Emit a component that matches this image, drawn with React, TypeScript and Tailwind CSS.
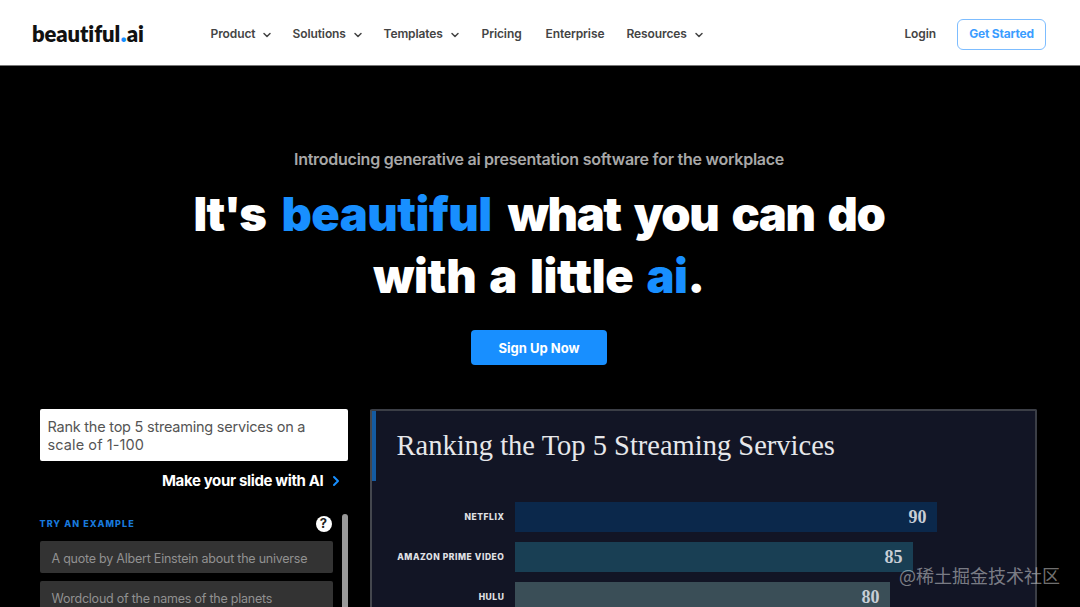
import React from 'react';
import { ChevronDown, ChevronRight } from 'lucide-react';

const navItems = [
  { label: 'Product', menu: true, width: 'w-[82px]' },
  { label: 'Solutions', menu: true, width: 'w-[91px]' },
  { label: 'Templates', menu: true, width: 'w-[98px]' },
  { label: 'Pricing', menu: false, width: 'w-[64px]' },
  { label: 'Enterprise', menu: false, width: 'w-[81px]' },
  { label: 'Resources', menu: true, width: 'w-[80px]' },
];

const examples = [
  'A quote by Albert Einstein about the universe',
  'Wordcloud of the names of the planets',
];

const services = [
  { name: 'NETFLIX', score: 90, bar: 'w-[422px] bg-[#0b284b]' },
  { name: 'AMAZON PRIME VIDEO', score: 85, bar: 'w-[398px] bg-[#193f54]' },
  { name: 'HULU', score: 80, bar: 'w-[375px] bg-[#3a4e57]' },
];

const Header = () => (
  <header className="flex h-[66px] shrink-0 items-center border-b border-[#777] bg-white pl-8 pr-[34px] pt-[3px] text-[#444]">
    <div className="w-[178.5px] whitespace-nowrap pb-[6px] font-['Lato',sans-serif] text-[22px] font-extrabold leading-6 tracking-[-0.1px] text-[#111]">
      beautiful<span className="text-[28px] font-black leading-none text-[#188fff]">.</span>ai
    </div>
    <nav className="flex text-[12px] font-semibold tracking-[-0.1px]">
      {navItems.map((item) => (
        <a key={item.label} className={`flex items-center gap-[6px] whitespace-nowrap ${item.width}`}>
          <span>{item.label}</span>
          {item.menu && <ChevronDown className="mt-px h-3 w-3 shrink-0" strokeWidth={3} />}
        </a>
      ))}
    </nav>
    <div className="ml-auto flex items-center gap-[21px] text-[12px]">
      <a className="font-semibold tracking-[-0.1px]">Login</a>
      <button className="h-[31px] w-[89px] whitespace-nowrap rounded-md border border-[#7dbdff] font-bold tracking-[-0.2px] text-[#3b9dff]">
        Get Started
      </button>
    </div>
  </header>
);

const Hero = () => (
  <section className="flex h-[343px] shrink-0 flex-col items-center pr-[2px] pt-[81px] text-center">
    <p className="whitespace-nowrap text-[16px] font-semibold leading-6 tracking-[-0.25px] text-[#a8a8a8]">
      Introducing generative ai presentation software for the workplace
    </p>
    <h1 className="mt-3 whitespace-nowrap text-[47px] font-black leading-[62px] text-white [word-spacing:5px]">
      <span className="block tracking-[-1.4px]">
        It's <span className="mx-[3px] tracking-[-0.5px] text-[#188fff]">beautiful</span> what you can do
      </span>
      <span className="block tracking-[-0.4px] [word-spacing:4px]">
        with a little <span className="text-[#188fff]">ai</span>.
      </span>
    </h1>
    <button className="mt-[23px] h-[35px] w-[136px] rounded-[4px] bg-[#188fff] pt-[2px] text-[13px] font-bold text-white">
      Sign Up Now
    </button>
  </section>
);

const PromptPanel = () => (
  <div className="w-[308px]">
    <div className="h-[52px] rounded-[2px] bg-white px-2 pt-[9px] text-[14.5px] leading-[18px] tracking-[-0.23px] text-[#555]">
      Rank the top 5 streaming services on a <span className="tracking-[0.1px]">scale of 1-100</span>
    </div>
    <div className="mt-[10px] flex items-center justify-end gap-1 pr-1 text-[15px] font-bold leading-5 tracking-[-0.35px] text-white">
      <span className="whitespace-nowrap">Make your slide with AI</span>
      <ChevronRight className="h-4 w-4 text-[#188fff]" strokeWidth={3} />
    </div>
    <div className="mt-[23px] flex justify-between">
      <div className="w-[293px]">
        <div className="flex h-[20px] items-center justify-between pr-[1px]">
          <span className="text-[9px] font-extrabold tracking-[1.05px] text-[#1879dc]">TRY AN EXAMPLE</span>
          <span className="flex h-4 w-4 items-center justify-center rounded-full bg-white text-[13px] font-bold text-[#222]">
            ?
          </span>
        </div>
        <div className="mt-[6.5px] flex flex-col gap-2">
          {examples.map((example) => (
            <div
              key={example}
              className="h-[32.5px] whitespace-nowrap rounded-[2px] bg-[#333] pl-3 text-[12.5px] leading-[35px] tracking-[-0.23px] text-[#919191]"
            >
              {example}
            </div>
          ))}
        </div>
      </div>
      <div className="h-[200px] w-[6px] rounded-t-full bg-[#999]" />
    </div>
  </div>
);

const Slide = () => (
  <div className="ml-[22px] flex h-[300px] w-[667px] rounded-[2px] border-2 border-[#3b3e46] border-l-[#44474e] bg-[#121525]">
    <div className="h-[70px] w-[4px] shrink-0 bg-[#145ba2]" />
    <div className="pl-[21px] pt-[17px]">
      <h2 className="whitespace-nowrap font-['Liberation_Serif',serif] text-[28.5px] leading-9 text-[#e6e7ea]">
        Ranking the Top 5 Streaming Services
      </h2>
      <div className="mt-[38px] flex flex-col gap-[10px]">
        {services.map((service) => (
          <div key={service.name} className="flex h-[30px] items-center">
            <div className="w-[108px] whitespace-nowrap text-right text-[8.5px] font-extrabold tracking-[0.57px] text-[#e0e1e5]">
              {service.name}
            </div>
            <div
              className={`ml-[10px] flex h-full items-center justify-end pr-[10px] font-['Liberation_Serif',serif] text-[18px] font-bold text-[#c8ced6] ${service.bar}`}
            >
              {service.score}
            </div>
          </div>
        ))}
      </div>
    </div>
  </div>
);

const App = () => {
  return (
    <div className="relative flex h-[607px] w-[1080px] flex-col overflow-hidden bg-black font-['Inter',sans-serif]">
      <Header />
      <Hero />
      <main className="flex h-[198px] items-start overflow-hidden pl-[39.5px]">
        <PromptPanel />
        <Slide />
      </main>
      <div className="absolute bottom-[20px] right-[20px] whitespace-nowrap font-['Noto_Sans_CJK_SC',sans-serif] text-[18px] leading-6 text-white/45">
        @稀土掘金技术社区
      </div>
    </div>
  );
};

export default App;
